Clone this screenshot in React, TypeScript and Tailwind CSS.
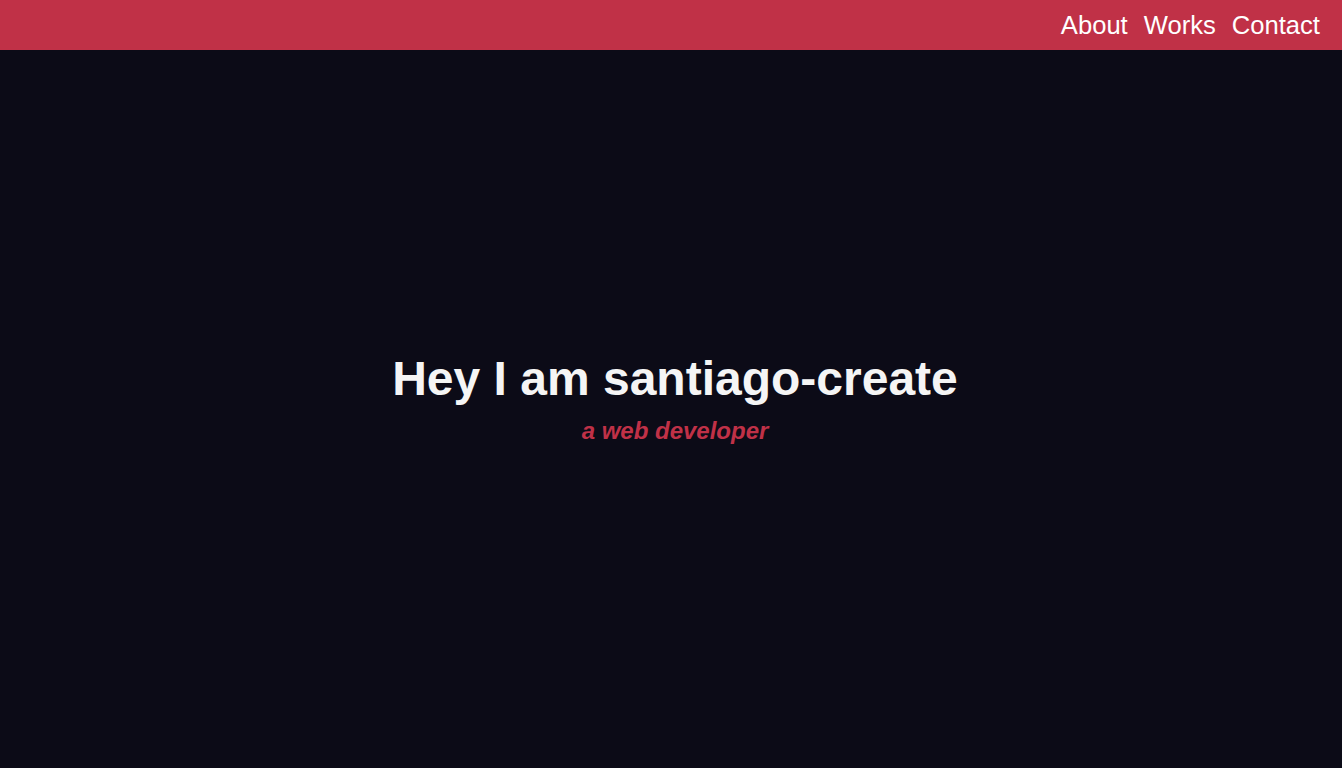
export default function App() {
    return (
        <div className="min-h-screen flex flex-col bg-[#0c0b17] font-['Liberation_Sans',Arial,sans-serif]">
            {/* Header */}
            <header className="h-[50px] bg-[#c03147] flex items-center justify-end pr-[22px]">
                <nav className="flex items-center gap-4 text-[25.6px] text-white">
                    <a href="#about">About</a>
                    <a href="#works">Works</a>
                    <a href="#contact">Contact</a>
                </nav>
            </header>

            {/* Hero */}
            <main className="flex-1 flex flex-col items-center justify-center text-center pl-2 pb-[22px]">
                <h1 className="text-[48px] font-bold leading-[56px] text-[#f5f5f5]">
                    Hey I am santiago-create
                </h1>
                <p className="mt-[10px] text-[24px] font-bold italic leading-[28px] text-[#c03147]">
                    a web developer
                </p>
            </main>
        </div>
    );
}
